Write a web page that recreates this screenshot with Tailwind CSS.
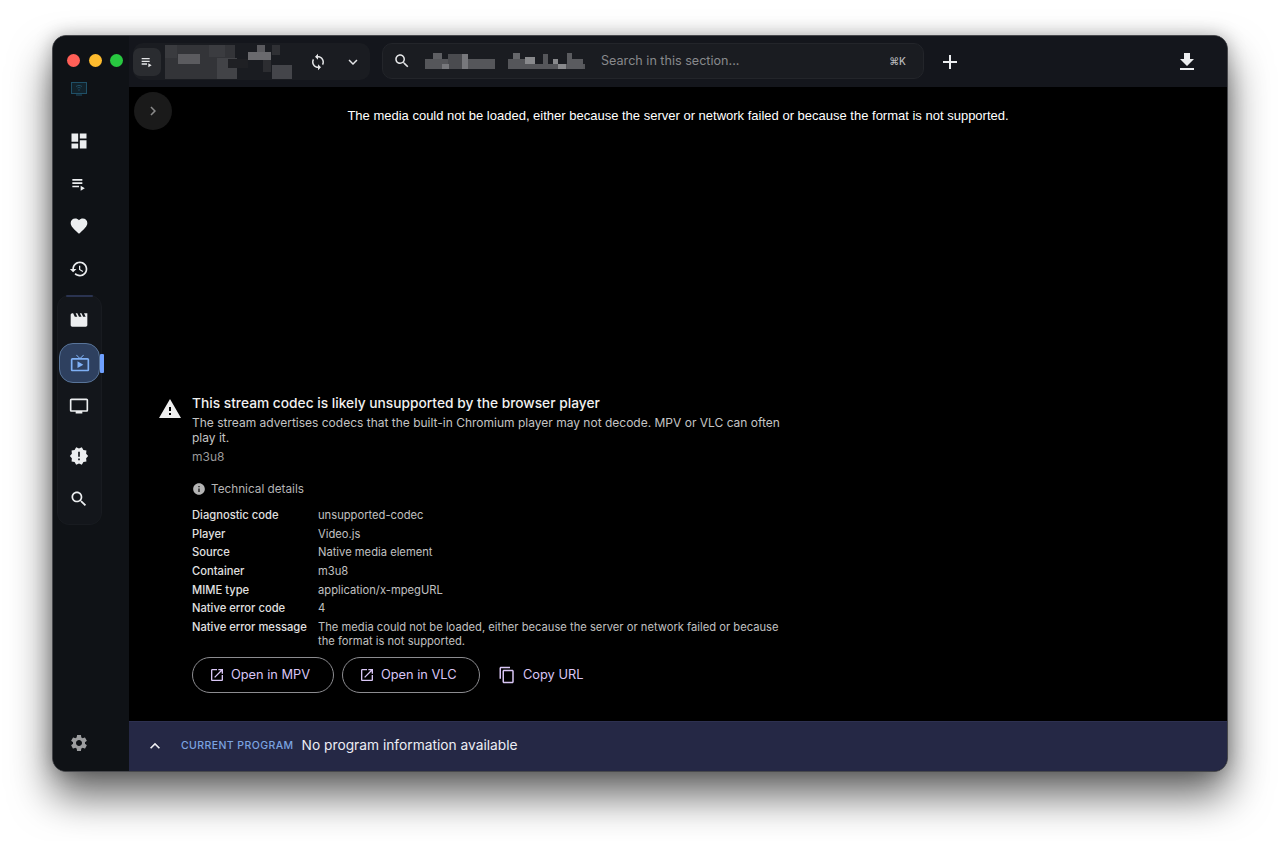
<!DOCTYPE html>
<html lang="en">
<head>
    <meta charset="UTF-8">
    <meta name="viewport" content="width=device-width, initial-scale=1.0">
    <title>Player</title>
    <script src="https://cdn.jsdelivr.net/npm/@tailwindcss/browser@4"></script>
</head>
<body class="bg-white [font-family:'Inter',sans-serif]">
<div class="w-[1280px] h-[841px] overflow-hidden pt-[35px] pl-[52px]">
    <div class="w-[1176px] h-[737px] flex rounded-[14px] overflow-hidden bg-[#14161c] border border-[#47484c] shadow-[0_24px_42px_rgba(0,0,0,0.6),0_0_18px_rgba(0,0,0,0.25)]">

        <!-- sidebar -->
        <aside class="w-[76px] shrink-0 flex flex-col bg-[#0f1216]">
            <div class="h-[46px] w-full flex items-end gap-[8.5px] pl-[14px] pb-[15px] shrink-0">
                <span class="w-[13px] h-[13px] rounded-full bg-[#ff5f57]"></span>
                <span class="w-[13px] h-[13px] rounded-full bg-[#febc2e]"></span>
                <span class="w-[13px] h-[13px] rounded-full bg-[#28c840]"></span>
            </div>
            <div class="flex-1 w-[52px] flex flex-col items-center">
                <svg class="w-[16px] h-[14px] text-[#1f4f66] shrink-0" viewBox="0 0 16 14" fill="none"><rect x="0.5" y="0.5" width="15" height="11" fill="#12222b" stroke="currentColor"/><path d="M5 4.5c2-1.4 4-1.4 6 0M6.5 6c1-.7 2-.7 3 0" stroke="currentColor"/><circle cx="8" cy="8" r="0.8" fill="currentColor"/><path d="M5 13h6" stroke="currentColor"/></svg>

                <div class="mt-[35px] flex flex-col items-center gap-[22.6px] text-[#eceef0]">
                    <svg class="w-[20px] h-[20px]" viewBox="0 0 24 24" fill="currentColor"><path d="M3 13h8V3H3v10zm0 8h8v-6H3v6zm10 0h8V11h-8v10zm0-18v6h8V3h-8z"/></svg>
                    <svg class="w-[20px] h-[20px]" viewBox="0 0 24 24" fill="currentColor"><path d="M4 10h12v2H4zm0-4h12v2H4zm0 8h8v2H4zm10 0v6l5-3z"/></svg>
                    <svg class="w-[20px] h-[20px]" viewBox="0 0 24 24" fill="currentColor"><path d="M12 21.35l-1.45-1.32C5.4 15.36 2 12.28 2 8.5 2 5.42 4.42 3 7.5 3c1.74 0 3.41.81 4.5 2.09C13.09 3.81 14.76 3 16.5 3 19.58 3 22 5.42 22 8.5c0 3.78-3.4 6.86-8.55 11.54L12 21.35z"/></svg>
                    <svg class="w-[20px] h-[20px]" viewBox="0 0 24 24" fill="currentColor"><path d="M13 3c-4.97 0-9 4.03-9 9H1l3.89 3.89.07.14L9 12H6c0-3.87 3.13-7 7-7s7 3.13 7 7-3.13 7-7 7c-1.93 0-3.68-.79-4.94-2.06l-1.42 1.42C8.27 19.99 10.51 21 13 21c4.97 0 9-4.03 9-9s-4.03-9-9-9zm-1 5v5l4.28 2.54.72-1.21-3.5-2.08V8H12z"/></svg>
                </div>

                <div class="relative mt-[16.2px] ml-[1px] w-[45px] h-[230px] shrink-0 pr-[1px] flex flex-col items-center rounded-[12px] bg-[#13161b] border border-[#181b20] text-[#eceef0]">
                    <span class="absolute -top-px left-[8px] right-[8px] h-[2px] rounded-full bg-[#2a3350]"></span>
                    <svg class="mt-[14px] w-[20px] h-[20px]" viewBox="0 0 24 24" fill="currentColor"><path d="M18 4l2 4h-3l-2-4h-2l2 4h-3l-2-4H8l2 4H7L5 4H4c-1.1 0-1.99.9-1.99 2L2 18c0 1.1.9 2 2 2h16c1.1 0 2-.9 2-2V4h-4z"/></svg>
                    <div class="relative mt-[13px] ml-[1px] w-[41px] h-[40px] shrink-0 flex items-center justify-center rounded-[14px] bg-[#2e405f] border border-[#587499] text-[#7fb0f5]">
                        <svg class="w-[20px] h-[20px]" viewBox="0 0 24 24" fill="currentColor"><path d="M21 6h-7.59l3.29-3.29L16 2l-4 4-4-4-.71.71L10.59 6H3c-1.1 0-2 .89-2 2v12c0 1.1.9 2 2 2h18c1.1 0 2-.9 2-2V8c0-1.11-.9-2-2-2zm0 14H3V8h18v12zM9 10v8l7-4z"/></svg>
                        <span class="absolute left-[40px] top-[10px] w-[4px] h-[19px] rounded-[1px] bg-[#6ea0ff]"></span>
                    </div>
                    <svg class="mt-[13px] w-[20px] h-[20px]" viewBox="0 0 24 24" fill="currentColor"><path d="M21 3H3c-1.1 0-2 .9-2 2v12c0 1.1.9 2 2 2h5v2h8v-2h5c1.1 0 1.99-.9 1.99-2L23 5c0-1.1-.9-2-2-2zm0 14H3V5h18v12z"/></svg>
                    <svg class="mt-[30px] w-[20px] h-[20px]" viewBox="0 0 24 24" fill="currentColor"><path d="M23 12l-2.44-2.78.34-3.68-3.61-.82-1.89-3.18L12 3 8.6 1.54 6.71 4.72l-3.61.81.34 3.68L1 12l2.44 2.78-.34 3.69 3.61.82 1.89 3.18L12 21l3.4 1.46 1.89-3.18 3.61-.82-.34-3.68L23 12zm-10 5h-2v-2h2v2zm0-4h-2V7h2v6z"/></svg>
                    <svg class="mt-[23px] w-[20px] h-[20px]" viewBox="0 0 24 24" fill="currentColor"><path d="M15.5 14h-.79l-.28-.27C15.41 12.59 16 11.11 16 9.5 16 5.91 13.09 3 9.5 3S3 5.91 3 9.5 5.91 16 9.5 16c1.61 0 3.09-.59 4.23-1.57l.27.28v.79l5 4.99L20.49 19l-4.99-5zm-6 0C7.01 14 5 11.99 5 9.5S7.01 5 9.5 5 14 7.01 14 9.5 11.99 14 9.5 14z"/></svg>
                </div>

                <svg class="mt-auto mb-[18px] w-[20px] h-[20px] text-[#9c9d9f]" viewBox="0 0 24 24" fill="currentColor"><path d="M19.14 12.94c.04-.3.06-.61.06-.94 0-.32-.02-.64-.07-.94l2.03-1.58c.18-.14.23-.41.12-.61l-1.92-3.32c-.12-.22-.37-.29-.59-.22l-2.39.96c-.5-.38-1.03-.7-1.62-.94l-.36-2.54c-.04-.24-.24-.41-.48-.41h-3.84c-.24 0-.43.17-.47.41l-.36 2.54c-.59.24-1.13.57-1.62.94l-2.39-.96c-.22-.08-.47 0-.59.22L2.74 8.87c-.12.21-.08.47.12.61l2.03 1.58c-.05.3-.09.63-.09.94s.02.64.07.94l-2.03 1.58c-.18.14-.23.41-.12.61l1.92 3.32c.12.22.37.29.59.22l2.39-.96c.5.38 1.03.7 1.62.94l.36 2.54c.05.24.24.41.48.41h3.84c.24 0 .44-.17.47-.41l.36-2.54c.59-.24 1.13-.56 1.62-.94l2.39.96c.22.08.47 0 .59-.22l1.92-3.32c.12-.22.07-.47-.12-.61l-2.01-1.58zM12 15.6c-1.98 0-3.6-1.62-3.6-3.6s1.62-3.6 3.6-3.6 3.6 1.62 3.6 3.6-1.62 3.6-3.6 3.6z"/></svg>
            </div>
        </aside>

        <div class="flex-1 min-w-0 flex flex-col">
            <!-- top bar -->
            <header class="h-[51px] shrink-0 flex items-center pl-[4px] bg-[#14161c]">
                <div class="w-[237px] h-[37px] flex items-center rounded-[10px] bg-[#1a1c21] text-[#e4e5e7]">
                    <div class="w-[28px] h-[28px] flex items-center justify-center rounded-[7px] bg-[#2a2c30]">
                        <svg class="w-[16px] h-[16px]" viewBox="0 0 24 24" fill="currentColor"><path d="M4 10h12v2H4zm0-4h12v2H4zm0 8h8v2H4zm10 0v6l5-3z"/></svg>
                    </div>
                    <!-- blurred-out channel name -->
                    <svg class="ml-[4px] w-[127px] h-[34px] blur-[0.5px]" viewBox="0 0 127 34">
                        <rect width="70" height="34" fill="#333438"/>
                        <rect width="12" height="13" fill="#3a3b3f"/>
                        <rect x="44" width="16" height="12" fill="#3b3c40"/>
                        <rect x="13" y="9" width="22" height="10" fill="#5b5b5f"/>
                        <rect x="52" y="13" width="20" height="21" fill="#424347"/>
                        <rect x="63" y="14" width="20" height="9" fill="#1f2024"/>
                        <rect x="92" width="8" height="7" fill="#5a5a5e"/>
                        <rect x="83" y="7" width="23" height="8" fill="#6a6a6e"/>
                        <rect x="107" width="8" height="10" fill="#2f3034"/>
                        <rect x="98" y="15" width="8" height="12" fill="#2c2d31"/>
                        <rect x="107" y="20" width="20" height="14" fill="#44454a"/>
                    </svg>
                    <svg class="ml-[17px] w-[18px] h-[18px]" viewBox="0 0 24 24" fill="currentColor"><path d="M12 4V1L8 5l4 4V6c3.31 0 6 2.69 6 6 0 1.01-.25 1.97-.7 2.8l1.46 1.46C19.54 15.03 20 13.57 20 12c0-4.42-3.58-8-8-8zm0 14c-3.31 0-6-2.69-6-6 0-1.01.25-1.97.7-2.8L5.24 7.74C4.46 8.97 4 10.43 4 12c0 4.42 3.58 8 8 8v3l4-4-4-4v3z"/></svg>
                    <svg class="ml-[17px] w-[18px] h-[18px]" viewBox="0 0 24 24" fill="currentColor"><path d="M16.59 8.59L12 13.17 7.41 8.59 6 10l6 6 6-6z"/></svg>
                </div>
                <div class="ml-[12px] -mt-[1px] w-[542px] h-[36px] flex items-center rounded-[10px] bg-[#1a1c21] border border-[#23252a] text-[#e4e5e7]">
                    <svg class="ml-[10px] w-[18px] h-[18px]" viewBox="0 0 24 24" fill="currentColor"><path d="M15.5 14h-.79l-.28-.27C15.41 12.59 16 11.11 16 9.5 16 5.91 13.09 3 9.5 3S3 5.91 3 9.5 5.91 16 9.5 16c1.61 0 3.09-.59 4.23-1.57l.27.28v.79l5 4.99L20.49 19l-4.99-5zm-6 0C7.01 14 5 11.99 5 9.5S7.01 5 9.5 5 14 7.01 14 9.5 11.99 14 9.5 14z"/></svg>
                    <!-- blurred-out breadcrumb -->
                    <svg class="ml-[14px] w-[160px] h-[16px] blur-[0.7px]" viewBox="0 0 160 16">
                        <rect y="6" width="70" height="10" fill="#55565a"/>
                        <rect x="8" width="9" height="6" fill="#5e5f63"/>
                        <rect x="23" y="1" width="20" height="15" fill="#4a4b4f"/>
                        <rect x="37" y="1" width="6" height="15" fill="#77787c"/>
                        <rect x="17" y="11" width="7" height="5" fill="#77787c"/>
                        <rect x="83" y="11" width="77" height="5" fill="#55565a"/>
                        <rect x="83" y="6" width="27" height="6" fill="#55565a"/>
                        <rect x="88" width="7" height="6" fill="#66676b"/>
                        <rect x="100" y="4" width="10" height="7" fill="#88898c"/>
                        <rect x="118" y="1" width="5" height="10" fill="#55565a"/>
                        <rect x="128" y="6" width="5" height="5" fill="#88898c"/>
                        <rect x="133" y="11" width="8" height="5" fill="#88898c"/>
                        <rect x="142" y="6" width="16" height="10" fill="#5a5b5f"/>
                        <rect x="142" width="5" height="6" fill="#5a5b5f"/>
                    </svg>
                    <span class="ml-[16px] mt-[1px] text-[12.6px] text-[#88898c]">Search in this section...</span>
                    <span class="ml-auto mr-[17px] text-[10px] font-medium text-[#b8b9bb]">⌘K</span>
                </div>
                <svg class="ml-[14px] w-[24px] h-[24px] text-[#eceef0]" viewBox="0 0 24 24" fill="currentColor"><path d="M19 13h-6v6h-2v-6H5v-2h6V5h2v6h6v2z"/></svg>
                <svg class="ml-auto mr-[28px] w-[24px] h-[24px] text-[#eceef0]" viewBox="0 0 24 24" fill="currentColor"><path d="M19 9h-4V3H9v6H5l7 7 7-7zM5 18v2h14v-2H5z"/></svg>
            </header>

            <!-- player -->
            <main class="relative flex-1 min-h-0 flex flex-col bg-black">
                <button class="absolute left-[5px] top-[5px] w-[38px] h-[38px] flex items-center justify-center rounded-full bg-[#1a1a1a] text-[#8a8a8a]">
                    <svg class="w-[18px] h-[18px]" viewBox="0 0 24 24" fill="currentColor"><path d="M10 6L8.59 7.41 13.17 12l-4.58 4.59L10 18l6-6z"/></svg>
                </button>
                <p class="pt-[20px] text-center text-[13px] leading-[17px] text-white [font-family:'Liberation_Sans',sans-serif]">The media could not be loaded, either because the server or network failed or because the format is not supported.</p>

                <div class="mt-auto mb-[28px] ml-[29px] flex gap-[10px]">
                    <svg class="mt-[2px] w-[24px] h-[24px] shrink-0 text-[#eeeeee]" viewBox="0 0 24 24" fill="currentColor"><path d="M1 21h22L12 2 1 21zm12-3h-2v-2h2v2zm0-4h-2v-4h2v4z"/></svg>
                    <div class="w-[600px]">
                        <h2 class="text-[13.75px] leading-[16px] font-medium text-[#f0f0f0]">This stream codec is likely unsupported by the browser player</h2>
                        <p class="mt-[4px] text-[12px] leading-[15.5px] text-[#c4c4c4]">The stream advertises codecs that the built-in Chromium player may not decode. MPV or VLC can often play it.</p>
                        <p class="mt-[3px] text-[12px] leading-[16px] text-[#9a9a9a]">m3u8</p>
                        <div class="mt-[16px] flex items-center gap-[5px] text-[11.75px] leading-[16px] text-[#b4b4b4]">
                            <svg class="w-[14px] h-[14px]" viewBox="0 0 24 24" fill="currentColor"><path d="M12 2C6.48 2 2 6.48 2 12s4.48 10 10 10 10-4.48 10-10S17.52 2 12 2zm1 15h-2v-6h2v6zm0-8h-2V7h2v2z"/></svg>
                            Technical details
                        </div>
                        <dl class="mt-[11px] grid grid-cols-[126px_1fr] gap-y-[4.7px] text-[11.2px] leading-[14px]">
                            <dt class="font-medium text-[#e0e0e0]">Diagnostic code</dt><dd class="text-[#c0c0c0]">unsupported-codec</dd>
                            <dt class="font-medium text-[#e0e0e0]">Player</dt><dd class="text-[#c0c0c0]">Video.js</dd>
                            <dt class="font-medium text-[#e0e0e0]">Source</dt><dd class="text-[#c0c0c0]">Native media element</dd>
                            <dt class="font-medium text-[#e0e0e0]">Container</dt><dd class="text-[#c0c0c0]">m3u8</dd>
                            <dt class="font-medium text-[#e0e0e0]">MIME type</dt><dd class="text-[#c0c0c0]">application/x-mpegURL</dd>
                            <dt class="font-medium text-[#e0e0e0]">Native error code</dt><dd class="text-[#c0c0c0]">4</dd>
                            <dt class="font-medium text-[#e0e0e0]">Native error message</dt><dd class="text-[#c0c0c0] w-[470px]">The media could not be loaded, either because the server or network failed or because the format is not supported.</dd>
                        </dl>
                        <div class="mt-[9px] flex items-center gap-[8px] text-[12.8px] text-[#d9c6f5]">
                            <button class="w-[142px] h-[36px] flex items-center pl-[16px] gap-[6px] rounded-full border border-[#8c8c90]">
                                <svg class="w-[16px] h-[16px]" viewBox="0 0 24 24" fill="currentColor"><path d="M19 19H5V5h7V3H5c-1.11 0-2 .9-2 2v14c0 1.1.89 2 2 2h14c1.1 0 2-.9 2-2v-7h-2v7zM14 3v2h3.59l-9.83 9.83 1.41 1.41L19 6.41V10h2V3h-7z"/></svg>
                                Open in MPV
                            </button>
                            <button class="w-[138px] h-[36px] flex items-center pl-[16px] gap-[6px] rounded-full border border-[#8c8c90]">
                                <svg class="w-[16px] h-[16px]" viewBox="0 0 24 24" fill="currentColor"><path d="M19 19H5V5h7V3H5c-1.11 0-2 .9-2 2v14c0 1.1.89 2 2 2h14c1.1 0 2-.9 2-2v-7h-2v7zM14 3v2h3.59l-9.83 9.83 1.41 1.41L19 6.41V10h2V3h-7z"/></svg>
                                Open in VLC
                            </button>
                            <button class="ml-[10px] h-[36px] flex items-center gap-[7px]">
                                <svg class="w-[18px] h-[18px]" viewBox="0 0 24 24" fill="currentColor"><path d="M16 1H4c-1.1 0-2 .9-2 2v14h2V3h12V1zm3 4H8c-1.1 0-2 .9-2 2v14c0 1.1.9 2 2 2h11c1.1 0 2-.9 2-2V7c0-1.1-.9-2-2-2zm0 16H8V7h11v14z"/></svg>
                                Copy URL
                            </button>
                        </div>
                    </div>
                </div>
            </main>

            <!-- current program -->
            <footer class="h-[50px] shrink-0 flex items-center pl-[16px] pb-[2px] bg-[#252845] border-t border-[#2d3050]">
                <svg class="w-[20px] h-[20px] text-[#f0f0f4]" viewBox="0 0 24 24" fill="currentColor"><path d="M12 8l-6 6 1.41 1.41L12 10.83l4.59 4.58L18 14z"/></svg>
                <span class="mt-[1px] ml-[16px] text-[10.5px] font-medium tracking-[0.04em] text-[#7ba3e0]">CURRENT PROGRAM</span>
                <span class="ml-[8px] text-[13.75px] text-[#ecedf4]">No program information available</span>
            </footer>
        </div>
    </div>
</div>
</body>
</html>
